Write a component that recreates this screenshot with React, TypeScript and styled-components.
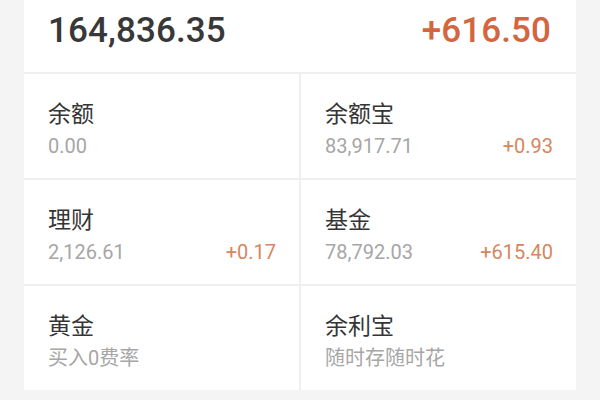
import React from 'react';
import styled, { createGlobalStyle } from 'styled-components';

/*
  Asset overview card:
  1. summary (total assets + yesterday's earnings)
  2. grid of products, two per row
*/

const GlobalStyle = createGlobalStyle`
  html, body {
    margin: 0;
    padding: 0;
    background: #f4f4f4;
    overflow: hidden;
  }
  body {
    font-family: Roboto, "Noto Sans CJK SC", sans-serif;
  }
`;

const Page = styled.div`
  width: 600px;
  height: 400px;
  padding: 0 24px;
  box-sizing: border-box;
  overflow: hidden;
`;

const Card = styled.div`
  margin-top: -19px;
  background: #efefef;
  display: flex;
  flex-direction: column;
  gap: 2px;
`;

const Summary = styled.div`
  background: #fff;
  padding: 0 25px 19px 24px;
`;

const SummaryRow = styled.div<{ gap?: number }>`
  display: flex;
  justify-content: space-between;
  align-items: center;
  margin-top: ${p => p.gap ?? 0}px;
`;

const SummaryLabel = styled.span`
  font-size: 15px;
  line-height: 20px;
  color: #b5b5b5;
`;

const BigAmount = styled.span<{ up?: boolean }>`
  font-size: 35px;
  line-height: 44px;
  font-weight: 500;
  letter-spacing: 0.1px;
  color: ${p => (p.up ? '#d3653f' : '#383838')};
`;

const Grid = styled.div`
  display: grid;
  grid-template-columns: 1fr 1fr;
  grid-auto-rows: 104px;
  gap: 2px;
`;

const Cell = styled.div`
  background: #fff;
  padding: 23px 23px 0 24px;
  display: flex;
  flex-direction: column;
`;

const Title = styled.div`
  font-family: "Noto Sans CJK SC", sans-serif;
  font-size: 23px;
  line-height: 30px;
  color: #353535;
`;

const Line = styled.div`
  margin-top: 6px;
  display: flex;
  justify-content: space-between;
  align-items: center;
  line-height: 26px;
`;

const Value = styled.span`
  font-family: Roboto, "Noto Sans CJK SC", sans-serif;
  font-size: 20px;
  color: #a6a6a6;
`;

const Gain = styled.span`
  font-size: 20px;
  color: #d6865f;
`;

type Item = { title: string; value: string; gain?: string };

const items: Item[] = [
  { title: '余额', value: '0.00' },
  { title: '余额宝', value: '83,917.71', gain: '+0.93' },
  { title: '理财', value: '2,126.61', gain: '+0.17' },
  { title: '基金', value: '78,792.03', gain: '+615.40' },
  { title: '黄金', value: '买入0费率' },
  { title: '余利宝', value: '随时存随时花' },
];

export default function App() {
  return (
    <>
      <GlobalStyle />
      <Page>
        <Card>
          <Summary>
            <SummaryRow>
              <SummaryLabel>总资产(元)</SummaryLabel>
              <SummaryLabel>昨日收益(元)</SummaryLabel>
            </SummaryRow>
            <SummaryRow gap={8}>
              <BigAmount>164,836.35</BigAmount>
              <BigAmount up>+616.50</BigAmount>
            </SummaryRow>
          </Summary>

          <Grid>
            {items.map(it => (
              <Cell key={it.title}>
                <Title>{it.title}</Title>
                <Line>
                  <Value>{it.value}</Value>
                  {it.gain && <Gain>{it.gain}</Gain>}
                </Line>
              </Cell>
            ))}
          </Grid>
        </Card>
      </Page>
    </>
  );
}
